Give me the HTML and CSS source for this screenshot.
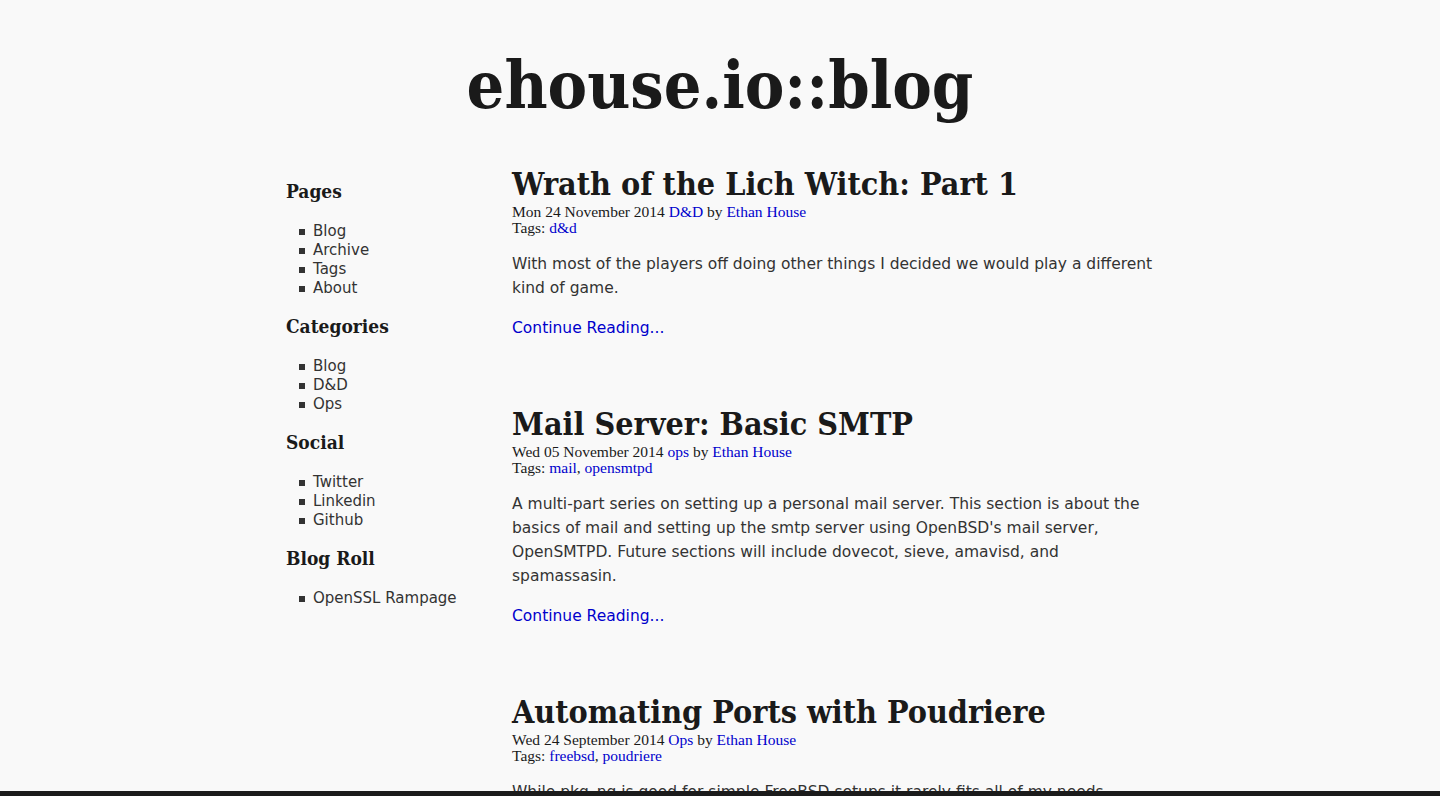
FILE: index.html
```html
<!DOCTYPE html>
<html>
<head>
<meta charset="utf-8">
<title>ehouse.io::blog</title>
<link rel="stylesheet" href="styles.css">
</head>
<body>
<header class="site-header">
  <h1 class="site-title">ehouse.io::blog</h1>
</header>
<div class="wrap">
  <aside class="sidebar">
    <h3 class="side-title">Pages</h3>
    <ul class="side-list">
      <li>Blog</li>
      <li>Archive</li>
      <li>Tags</li>
      <li>About</li>
    </ul>
    <h3 class="side-title">Categories</h3>
    <ul class="side-list">
      <li>Blog</li>
      <li>D&amp;D</li>
      <li>Ops</li>
    </ul>
    <h3 class="side-title">Social</h3>
    <ul class="side-list">
      <li>Twitter</li>
      <li>Linkedin</li>
      <li>Github</li>
    </ul>
    <h3 class="side-title">Blog Roll</h3>
    <ul class="side-list">
      <li>OpenSSL Rampage</li>
    </ul>
  </aside>
  <main class="content">
    <article class="post">
      <h2 class="post-title">Wrath of the Lich Witch: Part 1</h2>
      <div class="meta">Mon 24 November 2014 <a href="#">D&amp;D</a> by <a href="#">Ethan House</a></div>
      <div class="meta">Tags: <a href="#">d&amp;d</a></div>
      <p class="summary">With most of the players off doing other things I decided we would play a different kind of game.</p>
      <a class="more" href="#">Continue Reading...</a>
    </article>
    <article class="post">
      <h2 class="post-title">Mail Server: Basic SMTP</h2>
      <div class="meta">Wed 05 November 2014 <a href="#">ops</a> by <a href="#">Ethan House</a></div>
      <div class="meta">Tags: <a href="#">mail</a>, <a href="#">opensmtpd</a></div>
      <p class="summary">A multi-part series on setting up a personal mail server. This section is about the basics of mail and setting up the smtp server using OpenBSD's mail server, OpenSMTPD. Future sections will include dovecot, sieve, amavisd, and spamassasin.</p>
      <a class="more" href="#">Continue Reading...</a>
    </article>
    <article class="post">
      <h2 class="post-title">Automating Ports with Poudriere</h2>
      <div class="meta">Wed 24 September 2014 <a href="#">Ops</a> by <a href="#">Ethan House</a></div>
      <div class="meta">Tags: <a href="#">freebsd</a>, <a href="#">poudriere</a></div>
      <p class="summary">While pkg_ng is good for simple FreeBSD setups it rarely fits all of my needs.</p>
      <a class="more" href="#">Continue Reading...</a>
    </article>
  </main>
</div>
<div class="window-edge"></div>
</body>
</html>
```
FILE: styles.css
```css
html, body {
  margin: 0;
  padding: 0;
  background: #f9f9f9;
}
body {
  font-family: "DejaVu Sans", Verdana, sans-serif;
  font-size: 15.5px;
  color: #333;
  height: 796px;
  overflow: hidden;
}
.site-header {
  padding-top: 40px;
  text-align: center;
}
.site-title {
  margin: 0;
  font-family: "DejaVu Serif Condensed", "DejaVu Serif", Georgia, serif;
  font-stretch: condensed;
  font-weight: bold;
  font-size: 66px;
  line-height: 90px;
  color: #1a1a1a;
}
.wrap {
  width: 868px;
  margin: 34px auto 0;
  display: flex;
}
.sidebar {
  width: 226px;
  flex: none;
  padding-top: 15px;
}
.side-title {
  margin: 0 0 19px;
  font-family: "DejaVu Serif Condensed", "DejaVu Serif", Georgia, serif;
  font-stretch: condensed;
  font-weight: bold;
  font-size: 19px;
  line-height: 24px;
  color: #1a1a1a;
}
.side-list {
  list-style: none;
  margin: 0 0 16px;
  padding: 0 0 0 13px;
}
.side-list li {
  display: flex;
  align-items: center;
  line-height: 19px;
  font-size: 15px;
  color: #333;
}
.side-list li::before {
  content: "";
  width: 6px;
  height: 6px;
  margin-right: 8px;
  background: #333;
  flex: none;
}
.content {
  width: 642px;
  flex: none;
}
.post {
  margin-bottom: 64px;
}
.post-title {
  margin: 0;
  font-family: "DejaVu Serif Condensed", "DejaVu Serif", Georgia, serif;
  font-stretch: condensed;
  font-weight: bold;
  font-size: 32px;
  line-height: 40px;
  color: #1a1a1a;
  white-space: nowrap;
}
.meta {
  font-family: "Liberation Serif", "Times New Roman", serif;
  font-size: 15.5px;
  line-height: 16px;
  color: #1a1a1a;
}
.meta a, .more {
  color: #0000cc;
  text-decoration: none;
}
.summary {
  margin: 16px 0;
  line-height: 24px;
}
.more {
  display: block;
  line-height: 24px;
}
.window-edge {
  position: fixed;
  left: 0;
  right: 0;
  bottom: 0;
  height: 5px;
  background: #1b1b1b;
}
```
